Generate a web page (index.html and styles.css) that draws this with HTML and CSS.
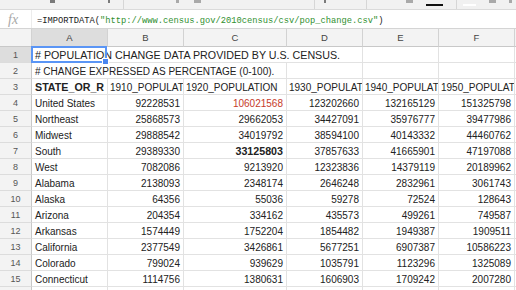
FILE: index.html
```html
<!DOCTYPE html>
<html>
<head>
<meta charset="utf-8">
<link rel="stylesheet" href="styles.css">
</head>
<body>
<div class="toolbar">
  <span class="tb tb-dark w5 m50"></span>
  <span class="tb tb-dark w2 m53"></span>
  <span class="sep m13"></span>
  <span class="tb tb-mid w3 m52"></span>
  <span class="tb tb-mid w7 m15"></span>
  <span class="sep m113"></span>
  <span class="tb tb-dark w2 m9"></span>
  <span class="sep m40"></span>
  <span class="tb tb-mid w7 m39"></span>
  <span class="tb bar-black m13"></span>
  <span class="sep m13"></span>
  <span class="tb bar-white m6"></span>
  <span class="tb tb-mid w7 m13"></span>
  <span class="tb tb-mid w3 m13"></span>
</div>
<div class="formula-bar">
  <div class="fx">fx</div>
  <div class="formula">=IMPORTDATA(<span class="str">"http://www.census.gov/2010census/csv/pop_change.csv"</span>)</div>
</div>
<div class="sheet">
  <div class="grid">
    <div class="corner"></div>
    <div class="colhead active">A</div>
    <div class="colhead">B</div>
    <div class="colhead">C</div>
    <div class="colhead">D</div>
    <div class="colhead">E</div>
    <div class="colhead">F</div>
    <div class="colhead"></div>

    <div class="rowhead active">1</div>
    <div class="cell title span4">
      # POPULATION CHANGE DATA PROVIDED BY U.S. CENSUS.
      <div class="selection"><span class="handle"></span></div>
    </div>
    <div class="cell"></div><div class="cell"></div><div class="cell"></div>

    <div class="rowhead">2</div>
    <div class="cell span3"># CHANGE EXPRESSED AS PERCENTAGE (0-100).</div>
    <div class="cell"></div><div class="cell"></div><div class="cell"></div><div class="cell"></div>

    <div class="rowhead">3</div>
    <div class="cell hdr-bold">STATE_OR_R</div>
    <div class="cell tight">1910_POPULAT</div>
    <div class="cell tight">1920_POPULATION</div>
    <div class="cell tight">1930_POPULAT</div>
    <div class="cell tight">1940_POPULAT</div>
    <div class="cell tight">1950_POPULAT</div>
    <div class="cell"></div>

    <div class="rowhead">4</div>
    <div class="cell">United States</div>
    <div class="cell num">92228531</div><div class="cell num red">106021568</div><div class="cell num">123202660</div><div class="cell num">132165129</div><div class="cell num">151325798</div><div class="cell"></div>

    <div class="rowhead">5</div>
    <div class="cell">Northeast</div>
    <div class="cell num">25868573</div><div class="cell num">29662053</div><div class="cell num">34427091</div><div class="cell num">35976777</div><div class="cell num">39477986</div><div class="cell"></div>

    <div class="rowhead">6</div>
    <div class="cell">Midwest</div>
    <div class="cell num">29888542</div><div class="cell num">34019792</div><div class="cell num">38594100</div><div class="cell num">40143332</div><div class="cell num">44460762</div><div class="cell"></div>

    <div class="rowhead">7</div>
    <div class="cell">South</div>
    <div class="cell num">29389330</div><div class="cell num bold">33125803</div><div class="cell num">37857633</div><div class="cell num">41665901</div><div class="cell num">47197088</div><div class="cell"></div>

    <div class="rowhead">8</div>
    <div class="cell">West</div>
    <div class="cell num">7082086</div><div class="cell num">9213920</div><div class="cell num">12323836</div><div class="cell num">14379119</div><div class="cell num">20189962</div><div class="cell"></div>

    <div class="rowhead">9</div>
    <div class="cell">Alabama</div>
    <div class="cell num">2138093</div><div class="cell num">2348174</div><div class="cell num">2646248</div><div class="cell num">2832961</div><div class="cell num">3061743</div><div class="cell"></div>

    <div class="rowhead">10</div>
    <div class="cell">Alaska</div>
    <div class="cell num">64356</div><div class="cell num">55036</div><div class="cell num">59278</div><div class="cell num">72524</div><div class="cell num">128643</div><div class="cell"></div>

    <div class="rowhead">11</div>
    <div class="cell">Arizona</div>
    <div class="cell num">204354</div><div class="cell num">334162</div><div class="cell num">435573</div><div class="cell num">499261</div><div class="cell num">749587</div><div class="cell"></div>

    <div class="rowhead">12</div>
    <div class="cell">Arkansas</div>
    <div class="cell num">1574449</div><div class="cell num">1752204</div><div class="cell num">1854482</div><div class="cell num">1949387</div><div class="cell num">1909511</div><div class="cell"></div>

    <div class="rowhead">13</div>
    <div class="cell">California</div>
    <div class="cell num">2377549</div><div class="cell num">3426861</div><div class="cell num">5677251</div><div class="cell num">6907387</div><div class="cell num">10586223</div><div class="cell"></div>

    <div class="rowhead">14</div>
    <div class="cell">Colorado</div>
    <div class="cell num">799024</div><div class="cell num">939629</div><div class="cell num">1035791</div><div class="cell num">1123296</div><div class="cell num">1325089</div><div class="cell"></div>

    <div class="rowhead">15</div>
    <div class="cell">Connecticut</div>
    <div class="cell num">1114756</div><div class="cell num">1380631</div><div class="cell num">1606903</div><div class="cell num">1709242</div><div class="cell num">2007280</div><div class="cell"></div>

    <div class="rowhead">16</div>
    <div class="cell"></div>
    <div class="cell"></div><div class="cell"></div><div class="cell"></div><div class="cell"></div><div class="cell"></div><div class="cell"></div>
  </div>
</div>
</body>
</html>
```
FILE: styles.css
```css
html, body {
  margin: 0;
  padding: 0;
  width: 516px;
  height: 290px;
  overflow: hidden;
  background: #ffffff;
  font-family: "Liberation Sans", Arial, sans-serif;
  color: #222;
}

.toolbar {
  height: 10px;
  background: #f1f1f1;
  border-bottom: 1px solid #dadada;
  box-sizing: border-box;
  display: flex;
  align-items: flex-start;
}
.tb { display: block; flex: none; }
.tb-dark { background: #7a7a7a; height: 3px; }
.tb-mid { background: #a9a9a9; height: 3px; }
.w2 { width: 2px; }
.w3 { width: 3px; }
.w5 { width: 5px; }
.w7 { width: 7px; }
.sep { display: block; flex: none; width: 1px; height: 9px; background: #d6d6d6; }
.bar-black { width: 17px; height: 2px; margin-top: 4px; background: #111; }
.bar-white { width: 13px; height: 2px; margin-top: 4px; background: #ffffff; }
.m6 { margin-left: 6px; }
.m9 { margin-left: 9px; }
.m13 { margin-left: 13px; }
.m15 { margin-left: 15px; }
.m39 { margin-left: 39px; }
.m40 { margin-left: 40px; }
.m50 { margin-left: 50px; }
.m52 { margin-left: 52px; }
.m53 { margin-left: 53px; }
.m113 { margin-left: 113px; }

.formula-bar {
  height: 19px;
  display: flex;
  align-items: center;
  border-bottom: 1px solid #d4d4d4;
  box-sizing: border-box;
  background: #fff;
}
.fx {
  width: 32px;
  height: 100%;
  box-sizing: border-box;
  padding-left: 8px;
  font-family: "Liberation Serif", "Times New Roman", serif;
  font-style: italic;
  font-size: 14px;
  line-height: 20px;
  color: #a8a8a8;
  border-right: 1px solid #ececec;
}
.formula {
  padding-left: 5px;
  font-family: "Liberation Mono", "DejaVu Sans Mono", monospace;
  font-size: 8.75px;
  color: #222;
  white-space: nowrap;
  padding-top: 3px;
}
.str { color: #2f8f2f; }

.sheet { position: relative; }
.grid {
  display: grid;
  grid-template-columns: 32px 76px 76px 103px 76px 76px 76px 60px;
  grid-template-rows: 18px;
  grid-auto-rows: 16px;
}
.corner, .colhead, .rowhead {
  background: #f3f3f3;
  box-sizing: border-box;
  border-right: 1px solid #d2d2d2;
  border-bottom: 1px solid #c8c8c8;
}
.colhead {
  font-size: 9.5px;
  color: #444;
  text-align: center;
  line-height: 17px;
}
.rowhead {
  font-size: 9px;
  color: #555;
  text-align: center;
  line-height: 16px;
  border-bottom-color: #dcdcdc;
  border-right-color: #c8c8c8;
}
.colhead.active, .rowhead.active { background: #dddddd; }

.cell {
  box-sizing: border-box;
  border-right: 1px solid #e2e2e2;
  border-bottom: 1px solid #e2e2e2;
  font-size: 10px;
  line-height: 15px;
  padding: 1px 3px 0 3px;
  white-space: nowrap;
  overflow: hidden;
  color: #222;
}
.cell.tight { padding-left: 2px; padding-right: 0; }
.span4 { grid-column: span 4; overflow: visible; position: relative; }
.span3 { grid-column: span 3; }
.title { font-size: 10.7px; }
.hdr-bold { font-weight: bold; font-size: 10.7px; }
.num { text-align: right; padding-right: 3px; }
.red { color: #c63a2a; }
.bold { font-weight: bold; font-size: 10.7px; }

.selection {
  position: absolute;
  left: -1px;
  top: -1px;
  width: 76px;
  height: 17px;
  box-sizing: border-box;
  border: 2px solid #5a95f5;
  pointer-events: none;
}
.handle {
  position: absolute;
  right: -4px;
  bottom: -4px;
  width: 5px;
  height: 5px;
  background: #4a86f0;
  border: 1px solid #fff;
}
```
